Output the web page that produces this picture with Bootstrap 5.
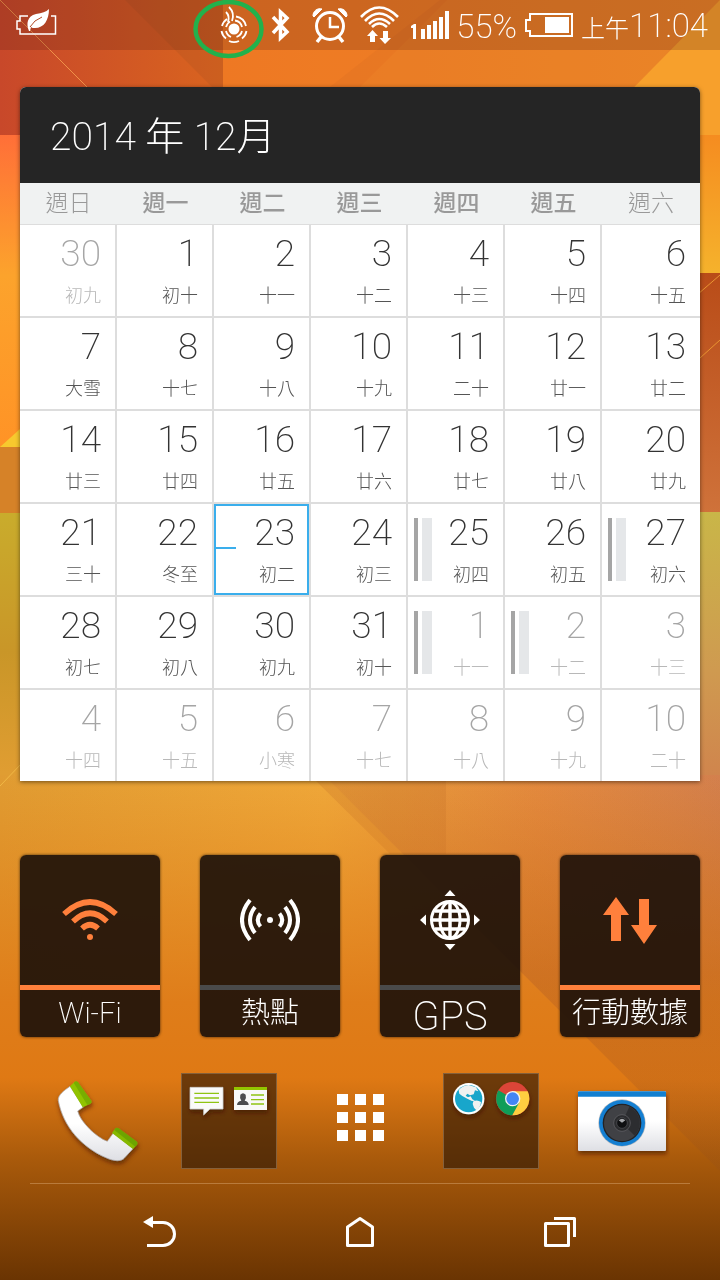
<!DOCTYPE html>
<html lang="zh-Hant">
<head>
  <meta charset="UTF-8">
  <meta name="viewport" content="width=device-width, initial-scale=1">
  <title>主畫面</title>
  <link href="https://cdn.jsdelivr.net/npm/bootstrap@5.3.3/dist/css/bootstrap.min.css" rel="stylesheet">
  <script src="https://cdn.jsdelivr.net/npm/bootstrap@5.3.3/dist/js/bootstrap.bundle.min.js"></script>
  <style>
    body {
      font-family: Roboto, "Noto Sans CJK TC", sans-serif;
      font-weight: 200;
      background: #c8700f;
    }
    .wallpaper { z-index: -1; }

    /* status bar */
    .status-bar {
      height: 50px;
      padding-left: 16px;
      padding-right: 12px;
      background: rgba(70, 20, 20, .2);
      color: #fff;
      font-weight: 200;
    }
    .status-text { font-size: 33px; line-height: 50px; padding-top: 4px; }
    .status-text small { font-size: 24px; }
    .status-bar svg { flex: none; }
    .marker { left: -14px; top: 0; }

    /* calendar */
    .calendar {
      margin: 37px 20px 0;
      border-radius: 6px 6px 0 0;
      overflow: hidden;
      box-shadow: 0 1px 4px rgba(0, 0, 0, .5);
      background: #fff;
    }
    .calendar-title {
      background: #252525;
      color: #fff;
      font-size: 39px;
      font-weight: 200;
      line-height: 56px;
      padding: 22px 30px 18px;
    }
    .month-grid { table-layout: fixed; border-collapse: separate; border-spacing: 0; }
    .month-grid th {
      height: 42px;
      padding: 0;
      background: #f0f2f2;
      border-bottom: 1px solid #ddd;
      color: #999;
      font-size: 23px;
      font-weight: 500;
      line-height: 41px;
      text-align: center;
    }
    .month-grid th:first-child, .month-grid th:last-child { font-weight: 300; }
    .month-grid th:last-child { width: 98px; }
    .month-grid td {
      height: 93px;
      padding: 7px 14px 0 6px;
      border-right: 2px solid #ddd;
      border-bottom: 2px solid #ddd;
      vertical-align: top;
      color: #333;
    }
    .month-grid td:last-child { border-right: 0; }
    .month-grid tr:last-child td { border-bottom: 0; height: 91px; }
    .day-number { font-size: 37px; font-weight: 200; line-height: 44px; }
    .day-lunar { font-size: 18px; font-weight: 300; line-height: 24px; margin-top: 8px; color: #555; }
    .month-grid .other-month { color: #a5a5a5; }
    .other-month .day-lunar { color: #b8b8b8; }
    .month-grid .today { position: relative; box-shadow: inset 0 0 0 2px #3aaeec; }
    .today::before {
      content: "";
      position: absolute;
      left: 0;
      top: 43px;
      width: 22px;
      height: 2px;
      background: #3aaeec;
    }
    .events { gap: 4px; margin-top: 7px; height: 63px; }
    .event-edge { width: 4px; background: #a5a5a5; }
    .event-body { width: 10px; background: #e5e7e9; }

    /* quick settings */
    .toggles { gap: 40px; margin: 74px 20px 0; }
    .toggle-tile {
      flex: 1 1 0;
      padding: 0;
      border: 0;
      border-radius: 6px;
      color: #fff;
      background: rgba(28, 16, 10, .91);
      box-shadow: 0 0 3px rgba(0, 0, 0, .7);
      font-weight: 200;
    }
    .toggle-icon { padding: 35px 0 35px; border-bottom: 5px solid #4a4a4a; }
    .toggle-tile.is-on .toggle-icon { border-color: #ff803c; }
    .toggle-label { font-size: 29px; line-height: 47px; }
    .toggle-label-lg { font-size: 40px; line-height: 40px; padding-top: 7px; }

    /* dock and navigation */
    .dock { margin: 36px 32px 0; }
    .dock-btn, .nav-btn { flex: 1 1 0; padding: 0; border: 0; background: none; }
    .dock-line { margin: 14px 30px 0; height: 1px; background: #b97b3c; }
    .nav-keys { padding: 24px 60px; }
  </style>
</head>
<body>
  <svg class="wallpaper position-fixed top-0 start-0 w-100 h-100" viewBox="0 0 720 1280" preserveAspectRatio="none" aria-hidden="true">
    <defs>
      <linearGradient id="base" x2="0" y2="1">
        <stop offset="0" stop-color="#e06a25"/><stop offset=".4" stop-color="#d99a2c"/>
        <stop offset=".62" stop-color="#efa43a"/><stop offset=".73" stop-color="#e3882a"/>
        <stop offset=".85" stop-color="#e57e18"/><stop offset=".92" stop-color="#9f560b"/>
        <stop offset="1" stop-color="#6a3402"/>
      </linearGradient>
      <linearGradient id="tl"><stop offset="0" stop-color="#c8482a"/><stop offset="1" stop-color="#d9641f"/></linearGradient>
      <linearGradient id="tr"><stop offset="0" stop-color="#f07d25"/><stop offset="1" stop-color="#f08c28"/></linearGradient>
      <linearGradient id="lf" x2="0" y2="1"><stop offset="0" stop-color="#ff6f38"/><stop offset=".45" stop-color="#fca32c"/><stop offset="1" stop-color="#ff9326"/></linearGradient>
      <linearGradient id="lg" x2="0" y2="1"><stop offset="0" stop-color="#c9ac2c"/><stop offset=".4" stop-color="#c99628"/><stop offset=".75" stop-color="#e09d32"/></linearGradient>
      <linearGradient id="ry" x2="0" y2="1"><stop offset="0" stop-color="#f58c20"/><stop offset="1" stop-color="#f5b22c"/></linearGradient>
      <linearGradient id="rr" x2="0" y2="1"><stop offset="0" stop-color="#b94c18"/><stop offset="1" stop-color="#cf723a"/></linearGradient>
      <linearGradient id="rg" x2="0" y2="1"><stop offset="0" stop-color="#c9b648"/><stop offset=".55" stop-color="#cf9a50"/><stop offset="1" stop-color="#d0804c"/></linearGradient>
      <linearGradient id="mid"><stop offset="0" stop-color="#e09c32"/><stop offset=".45" stop-color="#efa83a"/><stop offset=".75" stop-color="#e88f40"/><stop offset="1" stop-color="#d68450"/></linearGradient>
      <linearGradient id="low" x2="0" y2="1">
        <stop offset="0" stop-color="#e07e18" stop-opacity="0"/><stop offset=".45" stop-color="#df7d1a"/>
        <stop offset=".6" stop-color="#df7914"/><stop offset=".76" stop-color="#a95a0b"/><stop offset="1" stop-color="#6a3402"/>
      </linearGradient>
      <linearGradient id="shade" x2="0" y2="1">
        <stop offset="0" stop-color="#b85c38" stop-opacity=".1"/><stop offset=".5" stop-color="#a85428" stop-opacity=".3"/>
        <stop offset="1" stop-color="#8a4a20" stop-opacity=".15"/>
      </linearGradient>
    </defs>
    <rect width="720" height="1280" fill="url(#base)"/>
    <rect width="223" height="135" fill="url(#tl)"/>
    <path d="M125 0H223V87H212Z" fill="#a84e20" opacity=".25"/>
    <rect x="223" width="497" height="135" fill="url(#tr)"/>
    <path d="M223 0H447L360 87H223Z" fill="#e86c1f" opacity=".25"/>
    <path d="M440 0H720L635 87H330Z" fill="#d06a24" opacity=".2"/>
    <path d="M720 0V135H587Z" fill="#f7a02c"/>
    <path d="M0 0L88 88" stroke="#ef9048"/>
    <rect y="135" width="30" height="312" fill="url(#lf)"/>
    <path d="M0 447L30 420V447Z" fill="#f7c92e"/>
    <rect y="447" width="30" height="66" fill="#d68228"/>
    <rect y="513" width="30" height="347" fill="url(#lg)"/>
    <rect x="690" y="135" width="30" height="138" fill="url(#ry)"/>
    <rect x="690" y="273" width="30" height="239" fill="url(#rr)"/>
    <path d="M690 301L720 275M690 367L720 340" stroke="#e89432"/>
    <rect x="690" y="512" width="30" height="288" fill="url(#rg)"/>
    <rect y="775" width="720" height="300" fill="url(#mid)"/>
    <path d="M446 775V854H390L310 775Z" fill="#c8782c" opacity=".3"/>
    <rect y="775" width="720" height="505" fill="url(#low)"/>
    <path d="M324 775L720 1171V775Z" fill="url(#shade)"/>
    <path d="M0 786L22 763" stroke="#f0b846"/>
  </svg>

  <header class="status-bar d-flex align-items-center">
    <svg width="42" height="50" viewBox="16 0 42 50" role="img" aria-label="省電模式">
      <path d="M28 16H20V21H17V29H20V34H55.500V16H51" fill="none" stroke="#fff" stroke-width="1.500"/>
      <path d="M29 31C26 24 27 16 36 14C42 13 46 12 49 9C49 20 44 28 35 28C33 28 32 28 31 27L30 31Z" fill="#fff"/>
      <path d="M30 27Q34 20 42 17" stroke="#b24a27" fill="none"/>
    </svg>
    <div class="position-relative ms-auto">
      <svg class="d-block" width="56" height="50" viewBox="205 0 56 50" fill="none" stroke="#fff" role="img" aria-label="觸控">
        <circle cx="233" cy="29" r="5.500" fill="#fff" stroke="none"/>
        <path d="M229 21.500A8.500 8.500 0 0 0 225 27M225 31A8.500 8.500 0 0 0 230 37M235.500 37A8.500 8.500 0 0 0 241 31M241 27A8.500 8.500 0 0 0 234 20.500" stroke-width="1.800"/>
        <path d="M226 19A12.500 12.500 0 0 0 221 26M220.500 31A12.500 12.500 0 0 0 225 38.500M228 41A12.500 12.500 0 0 0 238 41M241 38.500A12.500 12.500 0 0 0 245.500 31M245 26A12.500 12.500 0 0 0 235 16.500" stroke-width="1.800"/>
        <path d="M225 12Q229 16 227 22M228 7Q234 13 231 21" stroke-width="1.800"/>
      </svg>
      <svg class="marker position-absolute" width="72" height="60" viewBox="191 0 72 60" aria-hidden="true">
        <ellipse cx="227.500" cy="29" rx="33" ry="27" fill="none" stroke="#22b14c" stroke-width="4.500"/>
      </svg>
    </div>
    <svg width="40" height="50" viewBox="261 0 40 50" role="img" aria-label="藍牙">
      <path d="M272 17L286 32L279.500 38V12L286 18L272 33" fill="none" stroke="#fff" stroke-width="3.500"/>
    </svg>
    <svg width="52" height="50" viewBox="301 0 52 50" fill="none" stroke="#fff" role="img" aria-label="鬧鐘">
      <circle cx="329" cy="26" r="13.500" stroke-width="3"/>
      <path d="M329 17V27H338" stroke-width="2.500"/>
      <path d="M320 37L316 42M338 37L342 42" stroke-width="3.500"/>
      <path d="M312 16A7 7 0 0 1 321 9L313 17ZM346 16A7 7 0 0 0 337 9L345 17Z" fill="#fff"/>
    </svg>
    <svg width="52" height="50" viewBox="353 0 52 50" fill="none" stroke="#fff" role="img" aria-label="Wi-Fi">
      <path d="M360 17Q378 -2 397 17M364 21Q378 6 393 21M368 24Q378 14 389 24M371 27Q378 20 386 27" stroke-width="2.600"/>
      <path d="M371.500 30L377 36H374V42H369V36H366ZM384 44L378.500 38H382V31H387V38H390Z" fill="#fff" stroke="none"/>
    </svg>
    <svg width="50" height="50" viewBox="405 0 50 50" fill="#fff" role="img" aria-label="訊號">
      <path d="M410 26L413 24H415V39H412V28H410ZM420 29H424V39H420ZM426 25H430V39H426ZM432 21H436V39H432ZM438 17H442V39H438ZM444 11H448V39H444Z"/>
    </svg>
    <span class="status-text">55%</span>
    <svg width="64" height="50" viewBox="518 0 64 50" role="img" aria-label="電池">
      <path d="M531 14H573V36H531V31H527V20H531Z" fill="none" stroke="#fff" stroke-width="2"/>
      <path d="M546 17H570V33H546Z" fill="#fff"/>
    </svg>
    <span class="status-text text-nowrap"><small>上午</small>11:04</span>
  </header>

  <main>
    <section class="calendar">
      <h1 class="calendar-title mb-0">2014 年 12月</h1>
      <table class="month-grid w-100">
        <thead>
          <tr><th>週日</th><th>週一</th><th>週二</th><th>週三</th><th>週四</th><th>週五</th><th>週六</th></tr>
        </thead>
        <tbody id="days"></tbody>
      </table>
    </section>

    <section class="toggles d-flex">
      <button type="button" class="toggle-tile is-on">
        <div class="toggle-icon">
          <svg class="d-block mx-auto" width="60" height="60" viewBox="60 890 60 60" fill="none" stroke="#ff803c" stroke-width="5.500" aria-hidden="true">
            <path d="M64 914Q90 890 116 914M73 921.500Q90 905 107 921.500M82 928.500Q90 921 98 928.500"/>
            <circle cx="90" cy="937" r="3" fill="#ff803c" stroke="none"/>
          </svg>
        </div>
        <div class="toggle-label">Wi-Fi</div>
      </button>
      <button type="button" class="toggle-tile">
        <div class="toggle-icon">
          <svg class="d-block mx-auto" width="60" height="60" viewBox="240 890 60 60" fill="none" stroke="#fff" stroke-width="4" aria-hidden="true">
            <path d="M250 900Q234 920 250 940M255 907Q245 920 255 933M260.500 913.500Q255 920 260.500 926.500M290 900Q306 920 290 940M285 907Q295 920 285 933M279.500 913.500Q285 920 279.500 926.500"/>
            <circle cx="270" cy="920" r="3" fill="#fff" stroke="none"/>
          </svg>
        </div>
        <div class="toggle-label">熱點</div>
      </button>
      <button type="button" class="toggle-tile">
        <div class="toggle-icon">
          <svg class="d-block mx-auto" width="60" height="60" viewBox="420 890 60 60" fill="none" stroke="#fff" aria-hidden="true">
            <circle cx="450" cy="920" r="18.500" stroke-width="3"/>
            <ellipse cx="450" cy="920" rx="10" ry="18" stroke-width="3"/>
            <path d="M450 902V938M432 920H468M435 911H465M435 929H465" stroke-width="3.500"/>
            <path d="M450 890L455.500 896H444.500ZM450 950L455.500 944H444.500ZM420 920L426 914.500V925.500ZM480 920L474 914.500V925.500Z" fill="#fff" stroke="none"/>
          </svg>
        </div>
        <div class="toggle-label toggle-label-lg">GPS</div>
      </button>
      <button type="button" class="toggle-tile is-on">
        <div class="toggle-icon">
          <svg class="d-block mx-auto" width="60" height="60" viewBox="600 890 60 60" fill="#ff803c" aria-hidden="true">
            <path d="M616 897L629 915H621V941H611V915H603ZM644 944L657 925H649V899H639V925H631Z"/>
          </svg>
        </div>
        <div class="toggle-label">行動數據</div>
      </button>
    </section>
  </main>

  <footer>
    <div class="dock d-flex">
      <button type="button" class="dock-btn" aria-label="電話">
        <svg class="d-block mx-auto" width="96" height="96" viewBox="150 39 288 288">
          <defs>
            <linearGradient id="white" x2="0" y2="1"><stop offset=".5" stop-color="#fff"/><stop offset="1" stop-color="#dedfe4"/></linearGradient>
            <filter id="drop" x="-20%" y="-20%" width="140%" height="150%"><feDropShadow dx="2" dy="9" stdDeviation="6" flood-color="#3a1800" flood-opacity=".6"/></filter>
          </defs>
          <g filter="url(#drop)">
            <path d="M175 122C173 105 192 92 210 79L250 141L233 153C240 185 290 233 322 244L340 219L399 266L373 294C365 304 345 305 320 294C245 262 190 200 175 122Z" fill="url(#white)" stroke="#a9a9ae" stroke-width="2"/>
            <path d="M210 79L223 66Q229 61 234 67L274 122Q277 128 271 131L248 142Z" fill="#91c300"/>
            <path d="M223 66Q229 61 234 67L274 122Q277 128 271 131L262 135L222 70Z" fill="#67a000" opacity=".6"/>
            <path d="M336 219L346 205Q350 201 356 205L408 243Q415 248 411 254L399 267Z" fill="#86b900"/>
            <path d="M346 205Q350 201 356 205L408 243Q415 248 411 254L406 260L343 210Z" fill="#5d9600" opacity=".6"/>
          </g>
        </svg>
      </button>
      <button type="button" class="dock-btn" aria-label="訊息與聯絡人">
        <svg class="d-block mx-auto" width="96" height="96" viewBox="543 39 288 288">
          <rect x="544.500" y="40.500" width="285" height="285" fill="#2a1605" fill-opacity=".63" stroke="#85603a" stroke-width="3"/>
          <g filter="url(#drop)">
            <path d="M570 82H669V147H630L611 165V147H570Z" fill="#fafafa" stroke="#c8c8c8" stroke-width="2"/>
            <path d="M702 84H801V150H702Z" fill="#f8f8f8"/>
          </g>
          <path d="M583 100H657M583 114H657M583 127H657M753 105H792M753 119H792M753 132H792" stroke="#8fc412" stroke-width="4"/>
          <path d="M702 81H801V90H702Z" fill="#93c500"/>
          <path d="M711 135Q711 124 724 122Q718 114 721 104Q729 95 737 104Q740 114 734 122Q746 124 746 135Z" fill="#4c4c4e"/>
        </svg>
      </button>
      <button type="button" class="dock-btn" aria-label="所有應用程式">
        <svg class="d-block mx-auto" width="96" height="96" viewBox="312 1073 96 96">
          <path d="M337 1094h11v11h-11zM355 1094h11v11h-11zM373 1094h11v11h-11zM337 1112h11v11h-11zM355 1112h11v11h-11zM373 1112h11v11h-11zM337 1130h11v11h-11zM355 1130h11v11h-11zM373 1130h11v11h-11z" fill="#fff"/>
        </svg>
      </button>
      <button type="button" class="dock-btn" aria-label="瀏覽器">
        <svg class="d-block mx-auto" width="96" height="96" viewBox="249 39 288 288">
          <rect x="250.500" y="40.500" width="285" height="285" fill="#2a1605" fill-opacity=".63" stroke="#85603a" stroke-width="3"/>
          <g filter="url(#drop)">
            <circle cx="326" cy="116" r="47" fill="#fff"/>
            <circle cx="458" cy="116" r="50" fill="#db4437"/>
          </g>
          <circle cx="326" cy="116" r="41" fill="#18a6cb"/>
          <path d="M296 90Q308 77 326 75L348 82L355 94L345 91L341 103L330 106L322 101L317 107L324 112L332 109L337 118L345 122L336 123L322 116L307 108L298 101ZM340 124Q352 118 363 126Q362 142 349 151L342 143L338 132Z" fill="#f0f1f0"/>
          <path d="M458 116L415 91A50 50 0 0 0 457 166L480 129Z" fill="#0f9d58"/>
          <path d="M458 94H503A50 50 0 0 1 457 166L478 127Z" fill="#ffcd40"/>
          <circle cx="458" cy="116" r="23" fill="#f3f3f3"/>
          <circle cx="458" cy="116" r="19" fill="#4285f4"/>
        </svg>
      </button>
      <button type="button" class="dock-btn" aria-label="相機">
        <svg class="d-block mx-auto" width="96" height="96" viewBox="642 39 288 288">
          <g filter="url(#drop)">
            <rect x="654" y="94" width="264" height="179" rx="4" fill="url(#white)"/>
          </g>
          <path d="M654 110V97Q654 94 658 94H914Q918 94 918 97V110Z" fill="#127fd0"/>
          <circle cx="786" cy="189" r="71" fill="#b9bcc0"/>
          <circle cx="786" cy="189" r="69" fill="#147fd2"/>
          <circle cx="786" cy="189" r="58" fill="#222326"/>
          <circle cx="786" cy="189" r="54" fill="#404145"/>
          <path d="M786 189L808 140A54 54 0 0 1 824 227Z" fill="#2c2d30"/>
          <circle cx="786" cy="189" r="25" fill="#2b2c2f" stroke="#66676b" stroke-width="2"/>
          <circle cx="786" cy="189" r="16" fill="#0f1012" stroke="#55565a" stroke-width="2"/>
          <path d="M776 181Q786 172 796 181L786 188Z" fill="#a7a9ad"/>
        </svg>
      </button>
    </div>
    <div class="dock-line"></div>
    <nav class="nav-keys d-flex" aria-label="導覽">
      <button type="button" class="nav-btn" aria-label="返回">
        <svg class="d-block mx-auto" width="48" height="48" viewBox="136 1208 48 48">
          <path d="M147 1245.500H163A11.500 11.500 0 0 0 163 1222.500H150" fill="none" stroke="#fff" stroke-width="3"/>
          <path d="M143 1222L153 1216V1228Z" fill="#fff"/>
        </svg>
      </button>
      <button type="button" class="nav-btn" aria-label="主畫面">
        <svg class="d-block mx-auto" width="48" height="48" viewBox="336 1208 48 48">
          <path d="M347.500 1245.500V1227L360 1218.500L372.500 1227V1245.500Z" fill="none" stroke="#fff" stroke-width="3" stroke-linejoin="round"/>
        </svg>
      </button>
      <button type="button" class="nav-btn" aria-label="最近使用">
        <svg class="d-block mx-auto" width="48" height="48" viewBox="536 1208 48 48">
          <path d="M545.500 1223.500H568.500V1245.500H545.500ZM554 1218.500H574.500V1237" fill="none" stroke="#fff" stroke-width="3" stroke-linejoin="round"/>
        </svg>
      </button>
    </nav>
  </footer>

  <script>
    // first cell is Nov 30, last one is Jan 10
    const lunar = [
      "初九", "初十", "十一", "十二", "十三", "十四", "十五",
      "大雪", "十七", "十八", "十九", "二十", "廿一", "廿二",
      "廿三", "廿四", "廿五", "廿六", "廿七", "廿八", "廿九",
      "三十", "冬至", "初二", "初三", "初四", "初五", "初六",
      "初七", "初八", "初九", "初十", "十一", "十二", "十三",
      "十四", "十五", "小寒", "十七", "十八", "十九", "二十"
    ];
    const withEvents = [25, 27, 32, 33];
    const today = 23;

    let html = "";
    for (let i = 0; i < lunar.length; i++) {
      const date = new Date(2014, 10, 30 + i);
      let cls = "";
      if (date.getMonth() !== 11) cls = "other-month";
      if (i === today) cls = "today";

      const bars = withEvents.includes(i)
        ? '<div class="events d-flex"><div class="event-edge"></div><div class="event-body"></div></div>'
        : "";

      if (i % 7 === 0) html += "<tr>";
      html += `<td class="${cls}"><div class="d-flex">${bars}
        <div class="ms-auto text-end">
          <div class="day-number">${date.getDate()}</div>
          <div class="day-lunar">${lunar[i]}</div>
        </div></div></td>`;
      if (i % 7 === 6) html += "</tr>";
    }
    document.getElementById("days").innerHTML = html;
  </script>
</body>
</html>
